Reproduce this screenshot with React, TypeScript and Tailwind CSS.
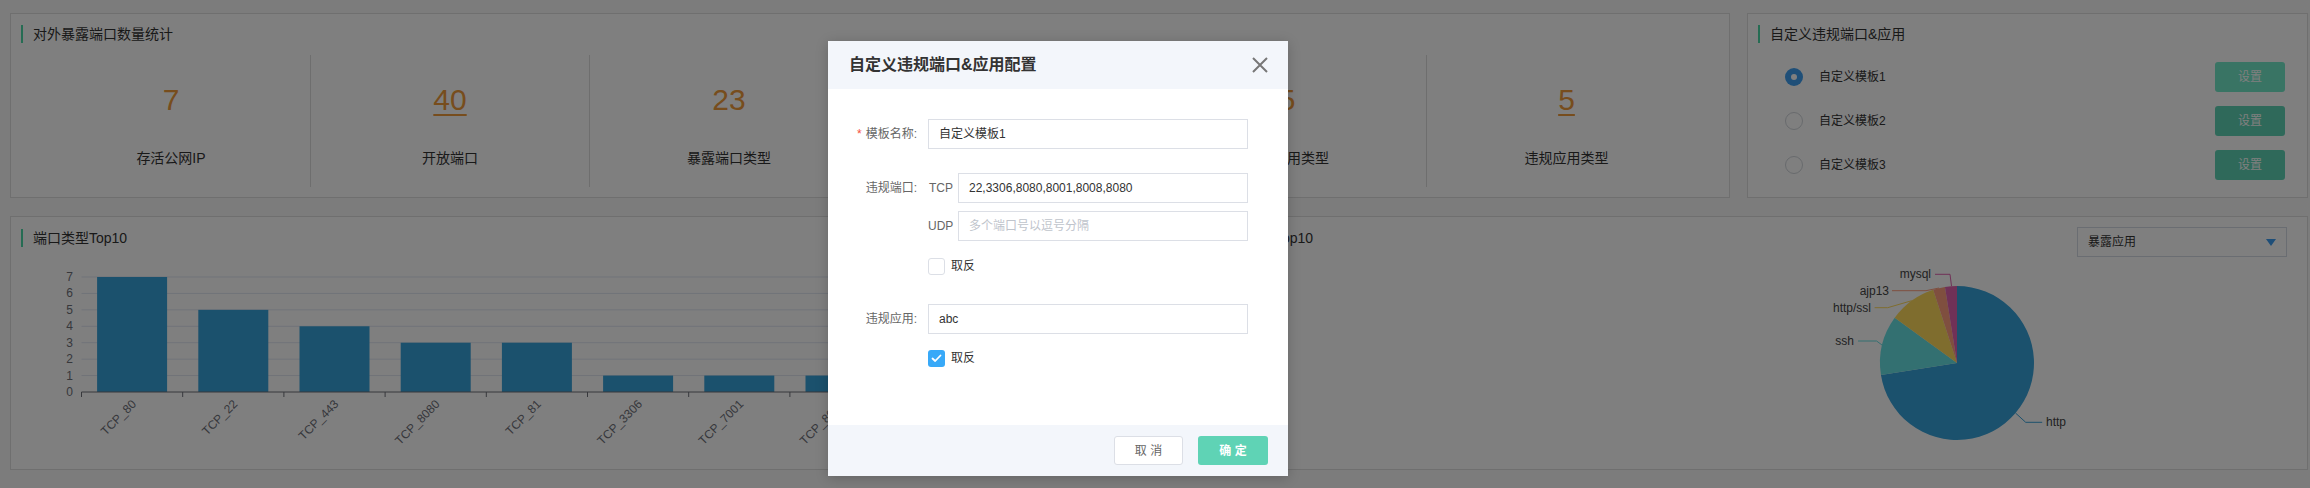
import React from 'react';

const STATS = [
  { value: '7', label: '存活公网IP', link: false },
  { value: '40', label: '开放端口', link: true },
  { value: '23', label: '暴露端口类型', link: false },
  { value: '6', label: '违规端口类型', link: true },
  { value: '5', label: '暴露应用类型', link: false },
  { value: '5', label: '违规应用类型', link: true },
];

const TEMPLATES = ['自定义模板1', '自定义模板2', '自定义模板3'];

const BARS: [string, number][] = [
  ['TCP_80', 7],
  ['TCP_22', 5],
  ['TCP_443', 4],
  ['TCP_8080', 3],
  ['TCP_81', 3],
  ['TCP_3306', 1],
  ['TCP_7001', 1],
  ['TCP_8001', 1],
  ['TCP_8008', 1],
  ['TCP_21', 1],
];

// pie: center/radius in svg coords, angles clockwise from 12 o'clock
const PIE = { cx: 788, cy: 103, r: 77 };
const SLICES = [
  { name: 'http', value: 29, color: '#37a2da', line: '846.5,153 856.7,162.3 873.2,162.3', tx: 877, ty: 162.3, anchor: 'start' },
  { name: 'ssh', value: 5, color: '#67e0e3', line: '713,85 707.6,81 689,81', tx: 685, ty: 81, anchor: 'end' },
  { name: 'http/ssl', value: 4, color: '#ffdb5c', line: '742.7,40.7 718.7,47.7 705.6,47.7', tx: 702, ty: 47.7, anchor: 'end' },
  { name: 'ajp13', value: 1, color: '#ff9f7f', line: '770,28 757,30.7 723,30.7', tx: 720, ty: 30.7, anchor: 'end' },
  { name: 'mysql', value: 1, color: '#e062ae', line: '782.5,26 781,14.3 766,14.3', tx: 762, ty: 14.3, anchor: 'end' },
];

const pt = (deg: number) => {
  const a = (deg * Math.PI) / 180;
  return [PIE.cx + PIE.r * Math.sin(a), PIE.cy - PIE.r * Math.cos(a)];
};

const PanelTitle = ({ children }: { children: React.ReactNode }) => (
  <div className="flex h-[18px] items-center">
    <i className="block h-[18px] w-[2px] bg-[#4cd9a6]" />
    <span className="ml-[10px] text-[14px] leading-[18px] text-[#333]">{children}</span>
  </div>
);

const BarChart = () => {
  const unit = 16.43;
  const x0 = 70.5;
  const step = 101.2;
  const axisY = 137;
  const ticks = [0, 1, 2, 3, 4, 5, 6, 7];
  return (
    <svg width="1138" height="214" className="mt-[8px] block">
      {ticks.map((t) => (
        <g key={t}>
          {t > 0 && (
            <line x1={x0} x2={x0 + step * 10} y1={axisY - t * unit} y2={axisY - t * unit} stroke="#e0e6f1" />
          )}
          <text
            x="62"
            y={axisY - t * unit}
            textAnchor="end"
            dominantBaseline="central"
            fontSize="12"
            fill="#6e7079"
          >
            {t}
          </text>
        </g>
      ))}
      {BARS.map(([name, v], i) => {
        const cx = x0 + step * i + step / 2;
        return (
          <g key={name}>
            <rect x={cx - 35} y={axisY - v * unit} width="70" height={v * unit} fill="#37a2da" />
            <text
              x={cx + 2}
              y={axisY + 10}
              textAnchor="end"
              dominantBaseline="central"
              fontSize="12"
              fill="#6e7079"
              transform={`rotate(-45 ${cx + 2} ${axisY + 10})`}
            >
              {name}
            </text>
          </g>
        );
      })}
      <line x1={x0} x2={x0 + step * 10} y1={axisY} y2={axisY} stroke="#6e7079" />
      {Array.from({ length: 11 }).map((_, i) => (
        <line key={i} x1={x0 + step * i} x2={x0 + step * i} y1={axisY} y2={axisY + 5} stroke="#6e7079" />
      ))}
    </svg>
  );
};

const PieChart = () => {
  const total = SLICES.reduce((s, d) => s + d.value, 0);
  let start = 0;
  return (
    <svg width="1138" height="209" className="mt-[3px] block">
      {SLICES.map((s) => {
        const end = start + (s.value / total) * 360;
        const [x1, y1] = pt(start);
        const [x2, y2] = pt(end);
        const large = end - start > 180 ? 1 : 0;
        const d = `M${PIE.cx},${PIE.cy} L${x1},${y1} A${PIE.r},${PIE.r} 0 ${large} 1 ${x2},${y2} Z`;
        start = end;
        return <path key={s.name} d={d} fill={s.color} />;
      })}
      {SLICES.map((s) => (
        <g key={s.name + '-label'}>
          <polyline points={s.line} fill="none" stroke={s.color} />
          <text
            x={s.tx}
            y={s.ty}
            textAnchor={s.anchor as 'start' | 'end'}
            dominantBaseline="central"
            fontSize="12"
            fill="#444"
          >
            {s.name}
          </text>
        </g>
      ))}
    </svg>
  );
};

const Checkbox = ({ checked }: { checked?: boolean }) =>
  checked ? (
    <span className="flex h-[17px] w-[17px] items-center justify-center rounded-[3px] bg-[#38a9f8]">
      <svg width="11" height="9" viewBox="0 0 11 9">
        <path d="M1.5 4.5 L4.2 7 L9.5 1.5" fill="none" stroke="#fff" strokeWidth="1.8" strokeLinecap="round" strokeLinejoin="round" />
      </svg>
    </span>
  ) : (
    <span className="block h-[17px] w-[17px] rounded-[3px] border border-[#dcdfe6] bg-white" />
  );

const Modal = () => (
  <div className="absolute left-[828px] top-[41px] w-[460px] bg-white shadow-[0_2px_12px_rgba(0,0,0,0.2)]">
    <div className="flex h-[48px] items-center justify-between bg-[#f3f6fb] pl-[21px] pr-[20px]">
      <h2 className="text-[16px] font-bold text-[#333]">自定义违规端口&amp;应用配置</h2>
      <svg width="16" height="16" viewBox="0 0 16 16">
        <path d="M1 1 L15 15 M15 1 L1 15" stroke="#777" strokeWidth="2" />
      </svg>
    </div>

    <div className="h-[336px] pt-[30px] text-[12px]">
      <div className="flex items-center">
        <label className="w-[90px] pr-[1px] text-right text-[#666]">
          <span className="mr-[4px] text-[#f5503c]">*</span>模板名称:
        </label>
        <div className="ml-[10px] flex h-[30px] w-[320px] items-center border border-[#dcdfe6] px-[10px] text-[#333]">
          自定义模板1
        </div>
      </div>

      <div className="mt-[24px] flex items-start">
        <label className="flex h-[30px] w-[90px] items-center justify-end pr-[1px] text-[#666]">违规端口:</label>
        <div className="ml-[10px] w-[320px]">
          <div className="flex items-center">
            <span className="w-[30px] pl-[1px] text-[#666]">TCP</span>
            <div className="flex h-[30px] flex-1 items-center border border-[#dcdfe6] px-[10px] text-[#333]">
              22,3306,8080,8001,8008,8080
            </div>
          </div>
          <div className="mt-[8px] flex items-center">
            <span className="w-[30px] text-[#666]">UDP</span>
            <div className="flex h-[30px] flex-1 items-center border border-[#dcdfe6] px-[10px] text-[#c0c4cc]">
              多个端口号以逗号分隔
            </div>
          </div>
          <div className="mt-[16px] flex items-center gap-[6px]">
            <Checkbox />
            <span className="text-[#333]">取反</span>
          </div>
        </div>
      </div>

      <div className="mt-[29px] flex items-center">
        <label className="w-[90px] pr-[1px] text-right text-[#666]">违规应用:</label>
        <div className="ml-[10px] flex h-[30px] w-[320px] items-center border border-[#dcdfe6] px-[10px] text-[#333]">
          abc
        </div>
      </div>
      <div className="ml-[100px] mt-[15px] flex items-center gap-[6px]">
        <Checkbox checked />
        <span className="text-[#333]">取反</span>
      </div>
    </div>

    <div className="flex h-[51px] items-center justify-end gap-[15px] bg-[#f3f6fb] pr-[20px] text-[12px]">
      <button className="h-[29px] w-[69px] rounded-[3px] border border-[#dcdfe6] bg-white text-[#666]">取 消</button>
      <button className="h-[29px] w-[70px] rounded-[3px] bg-[#5fd3b5] font-bold text-white">确 定</button>
    </div>
  </div>
);

export default function App() {
  return (
    <div className="relative h-[488px] w-[2310px] overflow-hidden bg-[#f9f9f9] pl-[10px] pt-[13px] font-['Liberation_Sans','Noto_Sans_CJK_SC',sans-serif]">
      <div className="flex gap-[17px]">
        <section className="h-[185px] w-[1720px] border border-[#dedede] bg-white pl-[10px] pt-[11px]">
          <PanelTitle>对外暴露端口数量统计</PanelTitle>
          <div className="ml-[11px] mt-[12px] grid h-[132px] w-[1674px] grid-cols-6 divide-x divide-[#dcdcdc]">
            {STATS.map((s) => (
              <div key={s.label} className="flex flex-col items-center pt-[27px]">
                <span
                  className={
                    s.link
                      ? 'text-[30px] leading-[36px] text-[#ef9a3a] underline decoration-[2px] underline-offset-[4px]'
                      : 'text-[30px] leading-[36px] text-[#ef9a3a]'
                  }
                >
                  {s.value}
                </span>
                <span className="mt-[30px] text-[14px] leading-[20px] text-[#333]">{s.label}</span>
              </div>
            ))}
          </div>
        </section>

        <section className="h-[185px] w-[561px] border border-[#dedede] bg-white pl-[10px] pr-[22px] pt-[11px]">
          <PanelTitle>自定义违规端口&amp;应用</PanelTitle>
          <ul className="mt-[19px] flex flex-col gap-[14px]">
            {TEMPLATES.map((t, i) => (
              <li key={t} className="flex h-[30px] items-center">
                {i === 0 ? (
                  <span className="ml-[27px] flex h-[18px] w-[18px] items-center justify-center rounded-full bg-[#3e9ff0]">
                    <span className="h-[6px] w-[6px] rounded-full bg-white" />
                  </span>
                ) : (
                  <span className="ml-[27px] block h-[18px] w-[18px] rounded-full border border-[#d0d4da] bg-white" />
                )}
                <span className="ml-[16px] text-[12px] text-[#333]">{t}</span>
                <button
                  className={
                    i === 0
                      ? 'ml-auto h-[30px] w-[70px] rounded-[3px] bg-[#72e8c8] text-[12px] text-white'
                      : 'ml-auto h-[30px] w-[70px] rounded-[3px] bg-[#5fd3b5] text-[12px] text-white'
                  }
                >
                  设置
                </button>
              </li>
            ))}
          </ul>
        </section>
      </div>

      <div className="mt-[18px] flex gap-[18px]">
        <section className="h-[254px] w-[1140px] border border-[#dedede] bg-white">
          <div className="pl-[10px] pt-[12px]">
            <PanelTitle>端口类型Top10</PanelTitle>
          </div>
          <BarChart />
        </section>

        <section className="h-[254px] w-[1140px] border border-[#dedede] bg-white">
          <div className="flex items-start justify-between">
            <div className="pl-[10px] pt-[12px]">
              <PanelTitle>暴露应用类型Top10</PanelTitle>
            </div>
            <div className="mr-[20px] mt-[10px] flex h-[30px] w-[210px] items-center justify-between border border-[#d5dbe4] pl-[10px] pr-[10px] text-[12px] text-[#333]">
              <span>暴露应用</span>
              <svg width="10" height="7" viewBox="0 0 10 7">
                <path d="M0 0 H10 L5 7 Z" fill="#3c9cf0" />
              </svg>
            </div>
          </div>
          <PieChart />
        </section>
      </div>

      <div className="absolute inset-0 bg-black/50" />
      <Modal />
    </div>
  );
}
